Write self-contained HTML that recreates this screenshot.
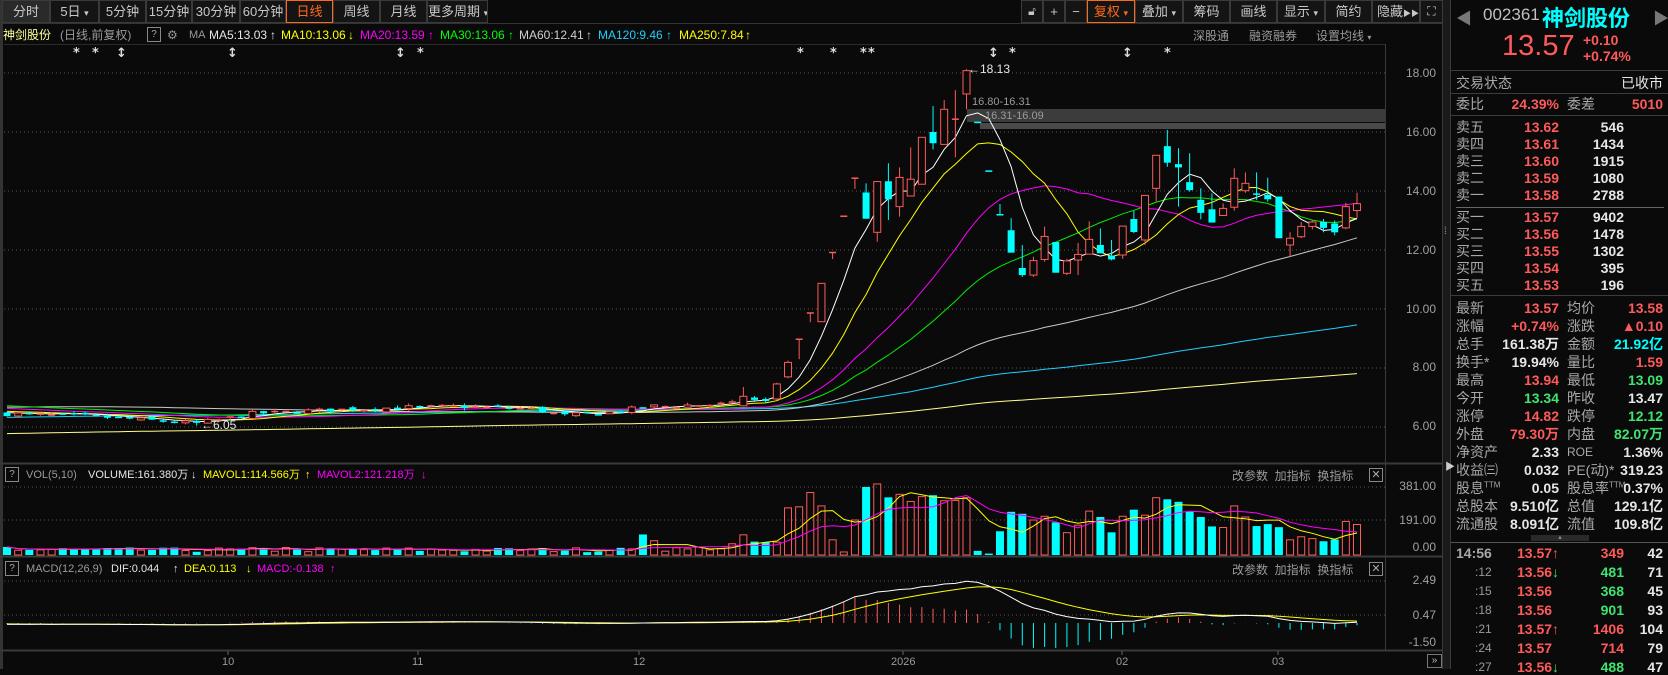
<!DOCTYPE html>
<html><head><meta charset="utf-8">
<style>
*{margin:0;padding:0;box-sizing:border-box}
body{width:1668px;height:669px;background:#0a0a0a;overflow:hidden;position:relative;font-family:"Liberation Sans","Noto Sans CJK SC",sans-serif;color:#ccc}
.a{position:absolute;white-space:nowrap}
.tb{position:absolute;top:0;height:23px;border:1px solid #3a3a3a;background:#141414;color:#c8c8c8;font-size:13px;line-height:21px;text-align:center;white-space:nowrap;overflow:hidden}
.r{color:#ff5a5a}.g{color:#3fe36f}.w{color:#e6e6e6}.c{color:#00ffff}.y{color:#ffff00}.m{color:#ff00ff}.gr{color:#9a9a9a}
.lab{position:absolute;left:1456px;font-size:14px;color:#a8a8a8;transform:translateY(-50%)}
.lab2{position:absolute;left:1567px;font-size:14px;color:#a8a8a8;transform:translateY(-50%)}
.v1{position:absolute;right:109px;font-size:14px;font-weight:bold;transform:translateY(-50%)}
.v2{position:absolute;right:44px;font-size:14px;font-weight:bold;transform:translateY(-50%)}
.v3{position:absolute;right:5px;font-size:14px;font-weight:bold;transform:translateY(-50%)}
.hl{position:absolute;height:1px;background:#3c3c3c}
.ax{position:absolute;font-size:12px;color:#a0a0a0;right:232px;transform:translateY(-50%)}
.h{position:absolute;top:28px;font-size:12px;line-height:14px;white-space:nowrap}
.h2{position:absolute;font-size:11px;line-height:14px;white-space:nowrap}
.q{position:absolute;border:1px solid #888;width:14px;height:15px;text-align:center;font-size:10px;line-height:13px;color:#aaa}
</style></head><body>
<svg id="ch" class="a" style="left:0;top:0" width="1451" height="669"></svg>

<!-- toolbar -->
<div class="tb" style="left:2px;width:48px;background:#2a2a2a">分时</div>
<div class="tb" style="left:50px;width:49px">5日 <span style="font-size:9px">▾</span></div>
<div class="tb" style="left:99px;width:47px">5分钟</div>
<div class="tb" style="left:146px;width:46px">15分钟</div>
<div class="tb" style="left:192px;width:48px">30分钟</div>
<div class="tb" style="left:240px;width:46px">60分钟</div>
<div class="tb" style="left:286px;width:47px;color:#ff6a1a;border-color:#ff6a1a">日线</div>
<div class="tb" style="left:333px;width:47px">周线</div>
<div class="tb" style="left:380px;width:47px">月线</div>
<div class="tb" style="left:427px;width:61px">更多周期 <span style="font-size:9px">▾</span></div>

<div class="tb" style="left:1021px;width:22px;font-size:12px">🔓︎</div>
<div class="tb" style="left:1043px;width:22px">+</div>
<div class="tb" style="left:1065px;width:22px">−</div>
<div class="tb" style="left:1087px;width:48px;color:#ff6a1a;border-color:#ff6a1a">复权 <span style="font-size:9px">▾</span></div>
<div class="tb" style="left:1135px;width:48px">叠加 <span style="font-size:9px">▾</span></div>
<div class="tb" style="left:1183px;width:47px">筹码</div>
<div class="tb" style="left:1230px;width:47px">画线</div>
<div class="tb" style="left:1277px;width:48px">显示 <span style="font-size:9px">▾</span></div>
<div class="tb" style="left:1325px;width:47px">简约</div>
<div class="tb" style="left:1372px;width:48px;text-align:left;padding-left:4px">隐藏<span style="font-size:8px">▶▶</span></div>
<div class="tb" style="left:1420px;width:23px;font-size:12px">⛶</div>

<!-- info line -->
<div class="h" style="left:3px;color:#ffff99">神剑股份</div>
<div class="h gr" style="left:60px">(日线,前复权)</div>
<div class="q" style="left:147px;top:27px">?</div>
<div class="h gr" style="left:167px">⚙︎</div>
<div class="h gr" style="left:189px;font-size:11px">MA</div>
<div class="h w" style="left:209px">MA5:13.03</div><div class="h w" style="left:270px">↑</div>
<div class="h y" style="left:281px">MA10:13.06</div><div class="h y" style="left:348px">↓</div>
<div class="h m" style="left:360px">MA20:13.59</div><div class="h m" style="left:428px">↑</div>
<div class="h" style="left:440px;color:#00ff00">MA30:13.06</div><div class="h" style="left:508px;color:#00ff00">↑</div>
<div class="h" style="left:519px;color:#cfcfcf">MA60:12.41</div><div class="h" style="left:586px;color:#cfcfcf">↑</div>
<div class="h" style="left:598px;color:#1ecfff">MA120:9.46</div><div class="h" style="left:666px;color:#1ecfff">↑</div>
<div class="h y" style="left:679px">MA250:7.84</div><div class="h y" style="left:745px">↑</div>
<div class="a gr" style="left:1193px;top:27px;font-size:12px">深股通</div>
<div class="a gr" style="left:1249px;top:27px;font-size:12px">融资融券</div>
<div class="a gr" style="left:1316px;top:27px;font-size:12px">设置均线 <span style="font-size:8px">▾</span></div>

<div id="stars"></div>

<div class="a w" style="left:968px;top:62px;font-size:12px">←18.13</div>
<div class="a gr" style="left:972px;top:96px;font-size:11px">16.80-16.31</div>
<div class="a gr" style="left:985px;top:110px;font-size:11px">16.31-16.09</div>
<div class="a w" style="left:201px;top:418px;font-size:12px">←6.05</div>

<div class="ax" style="top:73px">18.00</div>
<div class="ax" style="top:132px">16.00</div>
<div class="ax" style="top:191px">14.00</div>
<div class="ax" style="top:250px">12.00</div>
<div class="ax" style="top:309px">10.00</div>
<div class="ax" style="top:367px">8.00</div>
<div class="ax" style="top:426px">6.00</div>
<div class="ax" style="top:486px">381.00</div>
<div class="ax" style="top:520px">191.00</div>
<div class="ax" style="top:547px">0.00</div>
<div class="ax" style="top:580px">2.49</div>
<div class="ax" style="top:615px">0.47</div>
<div class="ax" style="top:642px">-1.50</div>

<!-- vol header -->
<div class="q" style="left:5px;top:467px">?</div>
<div class="h2 gr" style="left:26px;top:468px">VOL(5,10)</div>
<div class="h2 w" style="left:88px;top:468px">VOLUME:161.380万</div><div class="h2 w" style="left:191px;top:468px">↓</div>
<div class="h2 y" style="left:203px;top:468px">MAVOL1:114.566万</div><div class="h2 y" style="left:305px;top:468px">↑</div>
<div class="h2 m" style="left:317px;top:468px">MAVOL2:121.218万</div><div class="h2 m" style="left:421px;top:468px">↓</div>
<div class="a gr" style="left:1232px;top:467px;font-size:12px">改参数&nbsp; 加指标&nbsp; 换指标</div>
<div class="a" style="left:1369px;top:468px;width:14px;height:14px;border:1px solid #888;color:#aaa;font-size:11px;line-height:12px;text-align:center">✕</div>

<div class="q" style="left:5px;top:561px">?</div>
<div class="h2 gr" style="left:26px;top:562px">MACD(12,26,9)</div>
<div class="h2 w" style="left:111px;top:562px">DIF:0.044</div><div class="h2 w" style="left:173px;top:562px">↑</div>
<div class="h2 y" style="left:184px;top:562px">DEA:0.113</div><div class="h2 y" style="left:246px;top:562px">↓</div>
<div class="h2 m" style="left:257px;top:562px">MACD:-0.138</div><div class="h2 m" style="left:330px;top:562px">↑</div>
<div class="a gr" style="left:1232px;top:561px;font-size:12px">改参数&nbsp; 加指标&nbsp; 换指标</div>
<div class="a" style="left:1369px;top:562px;width:14px;height:14px;border:1px solid #888;color:#aaa;font-size:11px;line-height:12px;text-align:center">✕</div>

<div class="a gr" style="left:222px;top:656px;font-size:11px">10</div>
<div class="a gr" style="left:412px;top:656px;font-size:11px">11</div>
<div class="a gr" style="left:633px;top:656px;font-size:11px">12</div>
<div class="a gr" style="left:891px;top:656px;font-size:11px">2026</div>
<div class="a gr" style="left:1116px;top:656px;font-size:11px">02</div>
<div class="a gr" style="left:1272px;top:656px;font-size:11px">03</div>
<div class="a" style="left:1427px;top:654px;width:15px;height:14px;border:1px solid #777;color:#bbb;font-size:10px;line-height:12px;text-align:center">»</div>

<!-- right panel -->
<div class="a" style="left:1443px;top:0;width:8px;height:669px;background:#1a1a1a"></div>
<div class="a" style="left:1450px;top:0;width:1px;height:669px;background:#3c3c3c"></div>
<div class="a gr" style="left:1444px;top:226px;font-size:10px">⁞</div>
<div class="a" style="left:1445px;top:458px;font-size:10px;color:#ccc">▶</div>

<div class="a" style="left:1456px;top:5px;font-size:16px;color:#777">◀</div>
<div class="a" style="left:1483px;top:5px;font-size:17px;color:#c0c0c0">002361</div>
<div class="a c" style="left:1542px;top:1px;font-size:22px;font-weight:bold">神剑股份</div>
<div class="a" style="left:1653px;top:5px;font-size:16px;color:#777">▶</div>
<div class="a r" style="left:1502px;top:30px;font-size:29px;line-height:32px">13.57</div>
<div class="a r" style="left:1583px;top:32px;font-size:14px;font-weight:bold">+0.10</div>
<div class="a r" style="left:1583px;top:48px;font-size:14px;font-weight:bold">+0.74%</div>

<div class="hl" style="left:1451px;width:217px;top:70px"></div>
<div class="lab" style="top:83px">交易状态</div><div class="v3 w" style="top:83px;font-weight:normal">已收市</div>
<div class="hl" style="left:1451px;width:217px;top:93px"></div>
<div class="lab" style="top:104px">委比</div><div class="v1 r" style="top:104px">24.39%</div>
<div class="lab2" style="top:104px">委差</div><div class="v3 r" style="top:104px">5010</div>
<div class="hl" style="left:1451px;width:217px;top:115px"></div>

<div class="lab" style="top:127px">卖五</div><div class="v1 r" style="top:127px">13.62</div><div class="v2 w" style="top:127px">546</div>
<div class="lab" style="top:144px">卖四</div><div class="v1 r" style="top:144px">13.61</div><div class="v2 w" style="top:144px">1434</div>
<div class="lab" style="top:161px">卖三</div><div class="v1 r" style="top:161px">13.60</div><div class="v2 w" style="top:161px">1915</div>
<div class="lab" style="top:178px">卖二</div><div class="v1 r" style="top:178px">13.59</div><div class="v2 w" style="top:178px">1080</div>
<div class="lab" style="top:195px">卖一</div><div class="v1 r" style="top:195px">13.58</div><div class="v2 w" style="top:195px">2788</div>
<div class="hl" style="left:1456px;width:208px;top:207px;background:#666"></div>
<div class="lab" style="top:217px">买一</div><div class="v1 r" style="top:217px">13.57</div><div class="v2 w" style="top:217px">9402</div>
<div class="lab" style="top:234px">买二</div><div class="v1 r" style="top:234px">13.56</div><div class="v2 w" style="top:234px">1478</div>
<div class="lab" style="top:251px">买三</div><div class="v1 r" style="top:251px">13.55</div><div class="v2 w" style="top:251px">1302</div>
<div class="lab" style="top:268px">买四</div><div class="v1 r" style="top:268px">13.54</div><div class="v2 w" style="top:268px">395</div>
<div class="lab" style="top:285px">买五</div><div class="v1 r" style="top:285px">13.53</div><div class="v2 w" style="top:285px">196</div>
<div class="hl" style="left:1451px;width:217px;top:295px"></div>

<div class="lab" style="top:308px">最新</div><div class="v1 r" style="top:308px">13.57</div><div class="lab2" style="top:308px">均价</div><div class="v3 r" style="top:308px">13.58</div>
<div class="lab" style="top:326px">涨幅</div><div class="v1 r" style="top:326px">+0.74%</div><div class="lab2" style="top:326px">涨跌</div><div class="v3 r" style="top:326px">▲0.10</div>
<div class="lab" style="top:344px">总手</div><div class="v1 w" style="top:344px">161.38万</div><div class="lab2" style="top:344px">金额</div><div class="v3 c" style="top:344px">21.92亿</div>
<div class="lab" style="top:362px">换手*</div><div class="v1 w" style="top:362px">19.94%</div><div class="lab2" style="top:362px">量比</div><div class="v3 r" style="top:362px">1.59</div>
<div class="lab" style="top:380px">最高</div><div class="v1 r" style="top:380px">13.94</div><div class="lab2" style="top:380px">最低</div><div class="v3 g" style="top:380px">13.09</div>
<div class="lab" style="top:398px">今开</div><div class="v1 g" style="top:398px">13.34</div><div class="lab2" style="top:398px">昨收</div><div class="v3 w" style="top:398px">13.47</div>
<div class="lab" style="top:416px">涨停</div><div class="v1 r" style="top:416px">14.82</div><div class="lab2" style="top:416px">跌停</div><div class="v3 g" style="top:416px">12.12</div>
<div class="lab" style="top:434px">外盘</div><div class="v1 r" style="top:434px">79.30万</div><div class="lab2" style="top:434px">内盘</div><div class="v3 g" style="top:434px">82.07万</div>
<div class="lab" style="top:452px">净资产</div><div class="v1 w" style="top:452px">2.33</div><div class="lab2" style="top:452px;font-size:12px">ROE</div><div class="v3 w" style="top:452px">1.36%</div>
<div class="lab" style="top:470px">收益㈢</div><div class="v1 w" style="top:470px">0.032</div><div class="lab2" style="top:470px">PE(动)*</div><div class="v3 w" style="top:470px">319.23</div>
<div class="lab" style="top:488px">股息<sup style="font-size:8px">TTM</sup></div><div class="v1 w" style="top:488px">0.05</div><div class="lab2" style="top:488px">股息率<sup style="font-size:8px">TTM</sup></div><div class="v3 w" style="top:488px">0.37%</div>
<div class="lab" style="top:506px">总股本</div><div class="v1 w" style="top:506px">9.510亿</div><div class="lab2" style="top:506px">总值</div><div class="v3 w" style="top:506px">129.1亿</div>
<div class="lab" style="top:524px">流通股</div><div class="v1 w" style="top:524px">8.091亿</div><div class="lab2" style="top:524px">流值</div><div class="v3 w" style="top:524px">109.8亿</div>
<div class="a" style="left:1531px;top:535px;width:58px;height:6px;background:#2a2a2a;color:#888;font-size:6px;line-height:6px;text-align:center">▲</div>
<div class="hl" style="left:1451px;width:217px;top:542px;background:#555"></div>

<div class="lab w" style="top:553px;font-weight:bold">14:56</div><div class="a r" style="left:1517px;top:545px;font-size:14px;font-weight:bold">13.57↑</div><div class="v2 r" style="top:553px">349</div><div class="v3 w" style="top:553px">42</div>
<div class="a gr" style="left:1475px;top:565px;font-size:12px">:12</div><div class="a r" style="left:1517px;top:564px;font-size:14px;font-weight:bold">13.56<span class="g">↓</span></div><div class="v2 g" style="top:572px">481</div><div class="v3 w" style="top:572px">71</div>
<div class="a gr" style="left:1475px;top:584px;font-size:12px">:15</div><div class="a r" style="left:1517px;top:583px;font-size:14px;font-weight:bold">13.56</div><div class="v2 g" style="top:591px">368</div><div class="v3 w" style="top:591px">45</div>
<div class="a gr" style="left:1475px;top:603px;font-size:12px">:18</div><div class="a r" style="left:1517px;top:602px;font-size:14px;font-weight:bold">13.56</div><div class="v2 g" style="top:610px">901</div><div class="v3 w" style="top:610px">93</div>
<div class="a gr" style="left:1475px;top:622px;font-size:12px">:21</div><div class="a r" style="left:1517px;top:621px;font-size:14px;font-weight:bold">13.57↑</div><div class="v2 r" style="top:629px">1406</div><div class="v3 w" style="top:629px">104</div>
<div class="a gr" style="left:1475px;top:641px;font-size:12px">:24</div><div class="a r" style="left:1517px;top:640px;font-size:14px;font-weight:bold">13.57</div><div class="v2 r" style="top:648px">714</div><div class="v3 w" style="top:648px">79</div>
<div class="a gr" style="left:1475px;top:660px;font-size:12px">:27</div><div class="a r" style="left:1517px;top:659px;font-size:14px;font-weight:bold">13.56<span class="g">↓</span></div><div class="v2 g" style="top:667px">488</div><div class="v3 w" style="top:667px">47</div>

<script>
(function(){
var R='#ff5a5a',C='#00ffff',BG='#0a0a0a';
var N=122;function X(i){return 7+i*11.157}
function Y(p){return 73+(18-p)*29.5}
var seed=7;function rnd(){seed=(seed*16807)%2147483647;return seed/2147483647}
var anc=[[0,6.45],[8,6.35],[17,6.12],[22,6.45],[30,6.6],[40,6.7],[47,6.62],[50,6.38],[54,6.5],[58,6.7],[62,6.75],[65,6.8]];
function interp(i){for(var k=0;k<anc.length-1;k++){if(i>=anc[k][0]&&i<=anc[k+1][0]){var t=(i-anc[k][0])/(anc[k+1][0]-anc[k][0]);return anc[k][1]+t*(anc[k+1][1]-anc[k][1])}}return 6.8}
var D=[];var pc=6.45;
for(var i=0;i<66;i++){var c=interp(i)+(rnd()-0.5)*0.16;var o=pc+(rnd()-0.5)*0.1;var h=Math.max(o,c)+rnd()*0.08;var l=Math.min(o,c)-rnd()*0.08;D.push([o,c,h,l]);pc=c}
D[17][3]=6.05;
var H=[[6.72,7.04,7.36,6.7],[7.0,6.92,7.05,6.85],[6.95,6.88,7.0,6.82],[6.95,7.46,7.5,6.9],[7.7,8.19,8.25,7.65],[9.0,9.0,9.0,8.3],[9.89,9.89,9.89,9.55],[9.57,10.87,10.87,9.57],[11.94,11.94,11.94,11.69],[13.17,13.17,13.17,13.17],[14.46,14.46,14.46,14.07],[13.95,13.06,14.26,13.06],[12.6,14.32,14.32,12.28],[14.33,13.72,14.94,13.02],[13.47,14.46,14.8,13.13],[13.83,14.4,15.48,13.83],[14.23,15.82,15.82,14.23],[16.0,15.62,16.88,15.41],[15.58,16.77,17.08,15.58],[16.46,16.46,17.42,15.14],[17.29,18.08,18.13,16.77],[16.35,16.3,16.35,16.3],[14.7,14.66,14.7,14.66],[13.22,13.2,13.56,13.2],[12.67,11.91,13.08,11.91],[11.39,11.15,12.17,11.09],[11.15,11.64,11.77,11.09],[11.68,12.46,12.79,11.6],[12.27,11.23,12.27,11.23],[11.21,11.63,11.7,11.15],[11.66,11.85,12.24,11.15],[11.86,12.36,12.97,11.86],[12.17,11.89,12.73,11.89],[11.81,11.68,12.34,11.65],[11.83,12.81,12.81,11.7],[13.05,12.61,13.33,12.57],[12.34,13.85,13.85,12.17],[14.09,15.21,15.21,13.65],[15.52,14.96,16.07,14.82],[14.91,14.8,15.45,13.47],[14.3,14.03,15.28,13.98],[13.7,13.26,14.09,13.04],[13.38,12.93,13.92,12.93],[13.17,13.41,13.58,13.17],[13.45,14.43,14.77,13.33],[14.01,14.26,14.63,13.94],[13.92,13.88,14.63,13.7],[13.87,13.72,14.45,13.64],[13.81,12.4,13.81,12.4],[12.17,12.4,12.6,11.77],[12.45,12.8,12.95,12.4],[12.8,12.95,13.0,12.7],[12.95,12.75,13.05,12.6],[12.9,12.6,13.0,12.5],[12.75,13.47,13.6,12.7],[13.34,13.57,13.94,13.09]];
for(var k=0;k<H.length;k++)D.push(H[k]);
var VL=[44,29,35,63,113,75,70,72,264,270,350,275,85,17,196,381,398,323,340,300,327,335,304,306,321,23,8,133,242,231,196,217,183,125,167,246,213,127,217,254,223,321,312,298,244,213,160,154,275,213,162,173,156,85,102,92,77,87,188,171];
var V=[];for(i=0;i<62;i++)V.push(16+rnd()*26);V[0]=45;V[5]=38;V[25]=42;V[57]=115;V[58]=80;V[55]=40;
for(k=0;k<60;k++)V.push(VL[k]);
var hist=[];for(i=0;i<260;i++){var b;if(i<200)b=4.7+1.5*i/199;else if(i<230)b=6.2+0.8*(i-200)/30;else b=7.0-0.55*(i-230)/30;hist.push(b+(rnd()-0.5)*0.1)}
var cl=hist.concat(D.map(function(d){return d[1]}));var off=hist.length;
var s='';
function grid(y){s+='<line x1="4" x2="1385" y1="'+y+'" y2="'+y+'" stroke="#555" stroke-dasharray="1,3"/>'}
[18,16,14,12,10,8,6].forEach(function(p){grid(Y(p))});
grid(487);grid(520);grid(581);grid(615);
s+='<rect x="0" y="0" width="3" height="669" fill="#333"/>';
s+='<line x1="0" x2="1443" y1="23.5" y2="23.5" stroke="#333"/>';
s+='<line x1="4" x2="1385" y1="44.5" y2="44.5" stroke="#2a2a2a"/>';
[463.5,556.5,650.5].forEach(function(y){s+='<line x1="0" x2="1443" y1="'+y+'" y2="'+y+'" stroke="#3a3a3a" stroke-width="2"/>'});
s+='<line x1="1385.5" x2="1385.5" y1="44" y2="650" stroke="#3a3a3a"/>';
s+='<line x1="1442.5" x2="1442.5" y1="23" y2="669" stroke="#3a3a3a"/>';
s+='<rect x="967" y="109" width="418" height="13" fill="#3c3c3c"/><rect x="980" y="123" width="405" height="6" fill="#4a4a4a"/>';
function ma(n,col){var pts=[];for(var i=0;i<N;i++){var e=off+i,sm=0;for(var j=0;j<n;j++)sm+=cl[e-j];pts.push(X(i).toFixed(1)+','+Y(sm/n).toFixed(1))}s+='<polyline points="'+pts.join(' ')+'" fill="none" stroke="'+col+'" stroke-width="1"/>'}
ma(250,'#ffff88');ma(120,'#1ecfff');ma(60,'#c8c8c8');ma(30,'#00ee00');ma(20,'#ff00ff');ma(10,'#ffff00');ma(5,'#ffffff');
for(i=0;i<N;i++){var d=D[i],x=X(i),up=d[1]>=d[0],col=up?R:C;var t=Y(Math.max(d[0],d[1])),b=Y(Math.min(d[0],d[1]));var bh=Math.max(b-t,1);
if(up){s+='<line x1="'+x+'" x2="'+x+'" y1="'+Y(d[2])+'" y2="'+t+'" stroke="'+col+'"/><line x1="'+x+'" x2="'+x+'" y1="'+(t+bh)+'" y2="'+Y(d[3])+'" stroke="'+col+'"/>';
 if(bh>2)s+='<rect x="'+(x-3.5)+'" y="'+t+'" width="7" height="'+bh+'" fill="'+BG+'" stroke="'+col+'"/>';else s+='<rect x="'+(x-3.5)+'" y="'+t+'" width="7" height="1.5" fill="'+col+'"/>';}
else{s+='<line x1="'+x+'" x2="'+x+'" y1="'+Y(d[2])+'" y2="'+Y(d[3])+'" stroke="'+col+'"/><rect x="'+(x-3.5)+'" y="'+t+'" width="7" height="'+Math.max(bh,1.5)+'" fill="'+col+'"/>';}}
var vs=68/381;
for(i=0;i<N;i++){var x=X(i),up=D[i][1]>=D[i][0],h=V[i]*vs;if(up)s+='<rect x="'+(x-3.5)+'" y="'+(555-h)+'" width="7" height="'+h+'" fill="none" stroke="'+R+'"/>';else s+='<rect x="'+(x-4)+'" y="'+(555-h)+'" width="8" height="'+h+'" fill="'+C+'"/>';}
function vma(n,col){var pts=[];for(var i=0;i<N;i++){var sm=0,c=0;for(var j=0;j<n;j++){if(i-j>=0){sm+=V[i-j];c++}}pts.push(X(i)+','+(555-sm/c*vs).toFixed(1))}s+='<polyline points="'+pts.join(' ')+'" fill="none" stroke="'+col+'"/>'}
vma(5,'#ffff00');vma(10,'#ff00ff');
var e12=cl[0],e26=cl[0],dea=0,DIF=[],DEA=[];
for(var j=0;j<cl.length;j++){e12=e12+(cl[j]-e12)*2/13;e26=e26+(cl[j]-e26)*2/27;var df=e12-e26;dea=dea+(df-dea)*2/10;DIF.push(df);DEA.push(dea)}
var mz=623,ms=16.9;var p1=[],p2=[];
for(i=0;i<N;i++){var df=DIF[off+i],de=DEA[off+i],m=2*(df-de),x=X(i);
 s+='<line x1="'+x+'" x2="'+x+'" y1="'+mz+'" y2="'+(mz-m*ms).toFixed(1)+'" stroke="'+(m>=0?R:C)+'"/>';
 p1.push(x+','+(mz-df*ms).toFixed(1));p2.push(x+','+(mz-de*ms).toFixed(1));}
s+='<polyline points="'+p2.join(' ')+'" fill="none" stroke="#ffff00"/><polyline points="'+p1.join(' ')+'" fill="none" stroke="#fff"/>';
[228,418,639,903,1122,1278].forEach(function(x){s+='<line x1="'+x+'" x2="'+x+'" y1="651" y2="655" stroke="#666"/>'});
document.getElementById('ch').innerHTML=s;
var st='';[[77,'*'],[96,'*'],[120,'↕'],[231,'↕'],[399,'↕'],[421,'*'],[801,'*'],[834,'*'],[864,'*'],[872,'*'],[992,'↕'],[1013,'*'],[1126,'↕'],[1168,'*']].forEach(function(a){st+='<div class="a" style="left:'+(a[0]-4)+'px;top:46px;font-size:13px;font-weight:bold;color:#ddd;font-family:\'DejaVu Sans\',sans-serif">'+a[1]+'</div>'});
document.getElementById('stars').innerHTML=st;
})();
</script>
</body></html>
